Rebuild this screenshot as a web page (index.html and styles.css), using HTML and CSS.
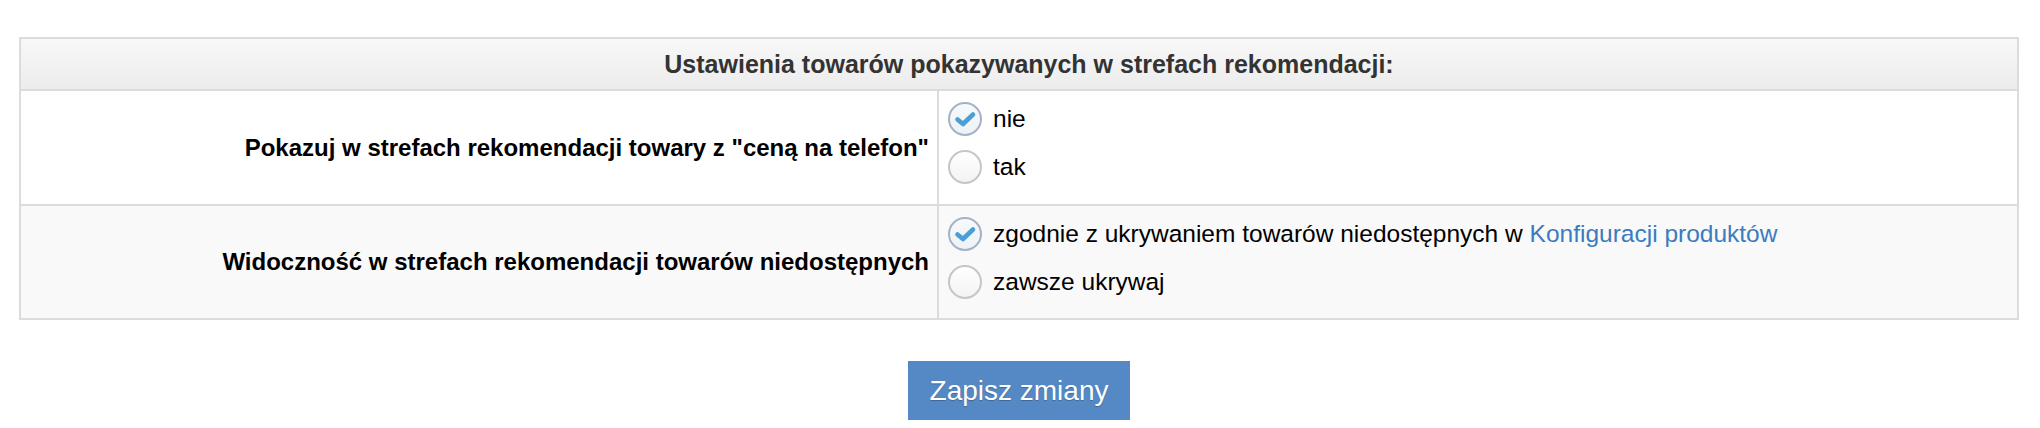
FILE: index.html
```html
<!DOCTYPE html>
<html lang="pl">
<head>
<meta charset="utf-8">
<title>Ustawienia</title>
<link rel="stylesheet" href="styles.css">
</head>
<body>
<div class="page">
  <table class="settings">
    <thead>
      <tr><th colspan="2">Ustawienia towarów pokazywanych w strefach rekomendacji:</th></tr>
    </thead>
    <tbody>
      <tr class="row row-a">
        <td class="label">Pokazuj w strefach rekomendacji towary z "ceną na telefon"</td>
        <td class="options">
          <label class="opt"><span class="radio checked"><svg viewBox="0 0 34 34" width="34" height="34"><path d="M9.5 17.5 L15 22 L25 12.5" fill="none" stroke="#4a9fd6" stroke-width="4.6" stroke-linecap="round" stroke-linejoin="round"/></svg></span><span>nie</span></label>
          <label class="opt"><span class="radio"></span><span>tak</span></label>
        </td>
      </tr>
      <tr class="row row-b">
        <td class="label">Widoczność w strefach rekomendacji towarów niedostępnych</td>
        <td class="options">
          <label class="opt"><span class="radio checked"><svg viewBox="0 0 34 34" width="34" height="34"><path d="M9.5 17.5 L15 22 L25 12.5" fill="none" stroke="#4a9fd6" stroke-width="4.6" stroke-linecap="round" stroke-linejoin="round"/></svg></span><span>zgodnie z ukrywaniem towarów niedostępnych w <a href="#">Konfiguracji produktów</a></span></label>
          <label class="opt"><span class="radio"></span><span>zawsze ukrywaj</span></label>
        </td>
      </tr>
    </tbody>
  </table>
  <div class="actions">
    <button class="save" type="button">Zapisz zmiany</button>
  </div>
</div>
</body>
</html>
```

FILE: styles.css
```css
html, body {
  margin: 0;
  padding: 0;
  background: #ffffff;
}

body {
  font-family: "Liberation Sans", Arial, Helvetica, sans-serif;
  color: #000;
}

.page {
  padding: 37px 21px 0 19px;
}

.settings {
  width: 2000px;
  border-collapse: collapse;
  border: 2px solid #dcdcdc;
}

.settings th {
  height: 50px;
  padding: 0 0 0 20px;
  font-size: 25px;
  font-weight: bold;
  color: #333;
  text-align: center;
  background: linear-gradient(#f8f8f8, #ececec);
  border-bottom: 2px solid #dcdcdc;
}

.settings td {
  border: 2px solid #dcdcdc;
  vertical-align: middle;
}

.row-a td { background: #ffffff; }
.row-b td { background: #f9f9f9; }

.label {
  width: 908px;
  padding: 0 8px 0 0;
  text-align: right;
  font-size: 24px;
  font-weight: bold;
}

.options {
  padding: 4px 8px 13px 9px;
  font-size: 24.5px;
}

.row-b .options {
  padding-bottom: 12px;
}

.opt {
  display: flex;
  align-items: center;
  height: 48px;
  gap: 11px;
}

.radio {
  box-sizing: border-box;
  width: 34px;
  height: 34px;
  border-radius: 50%;
  border: 2px solid #c6c6c6;
  background: linear-gradient(#ffffff, #f3f3f3);
  display: flex;
  align-items: center;
  justify-content: center;
  flex: none;
}

.radio svg {
  display: block;
  margin: -2px;
}

.radio.checked {
  border-color: #a3b3c4;
  background: linear-gradient(#f7f9fb, #eef2f6);
}

.options a {
  color: #3b7bbf;
  text-decoration: none;
}

.actions {
  display: flex;
  justify-content: center;
  padding-top: 41px;
}

.save {
  width: 222px;
  height: 59px;
  padding: 0;
  border: none;
  background: #5589c5;
  color: #ffffff;
  font-family: "Liberation Sans", Arial, Helvetica, sans-serif;
  font-size: 28px;
  text-shadow: 0 1px 1px rgba(0, 0, 0, 0.25);
}
```
